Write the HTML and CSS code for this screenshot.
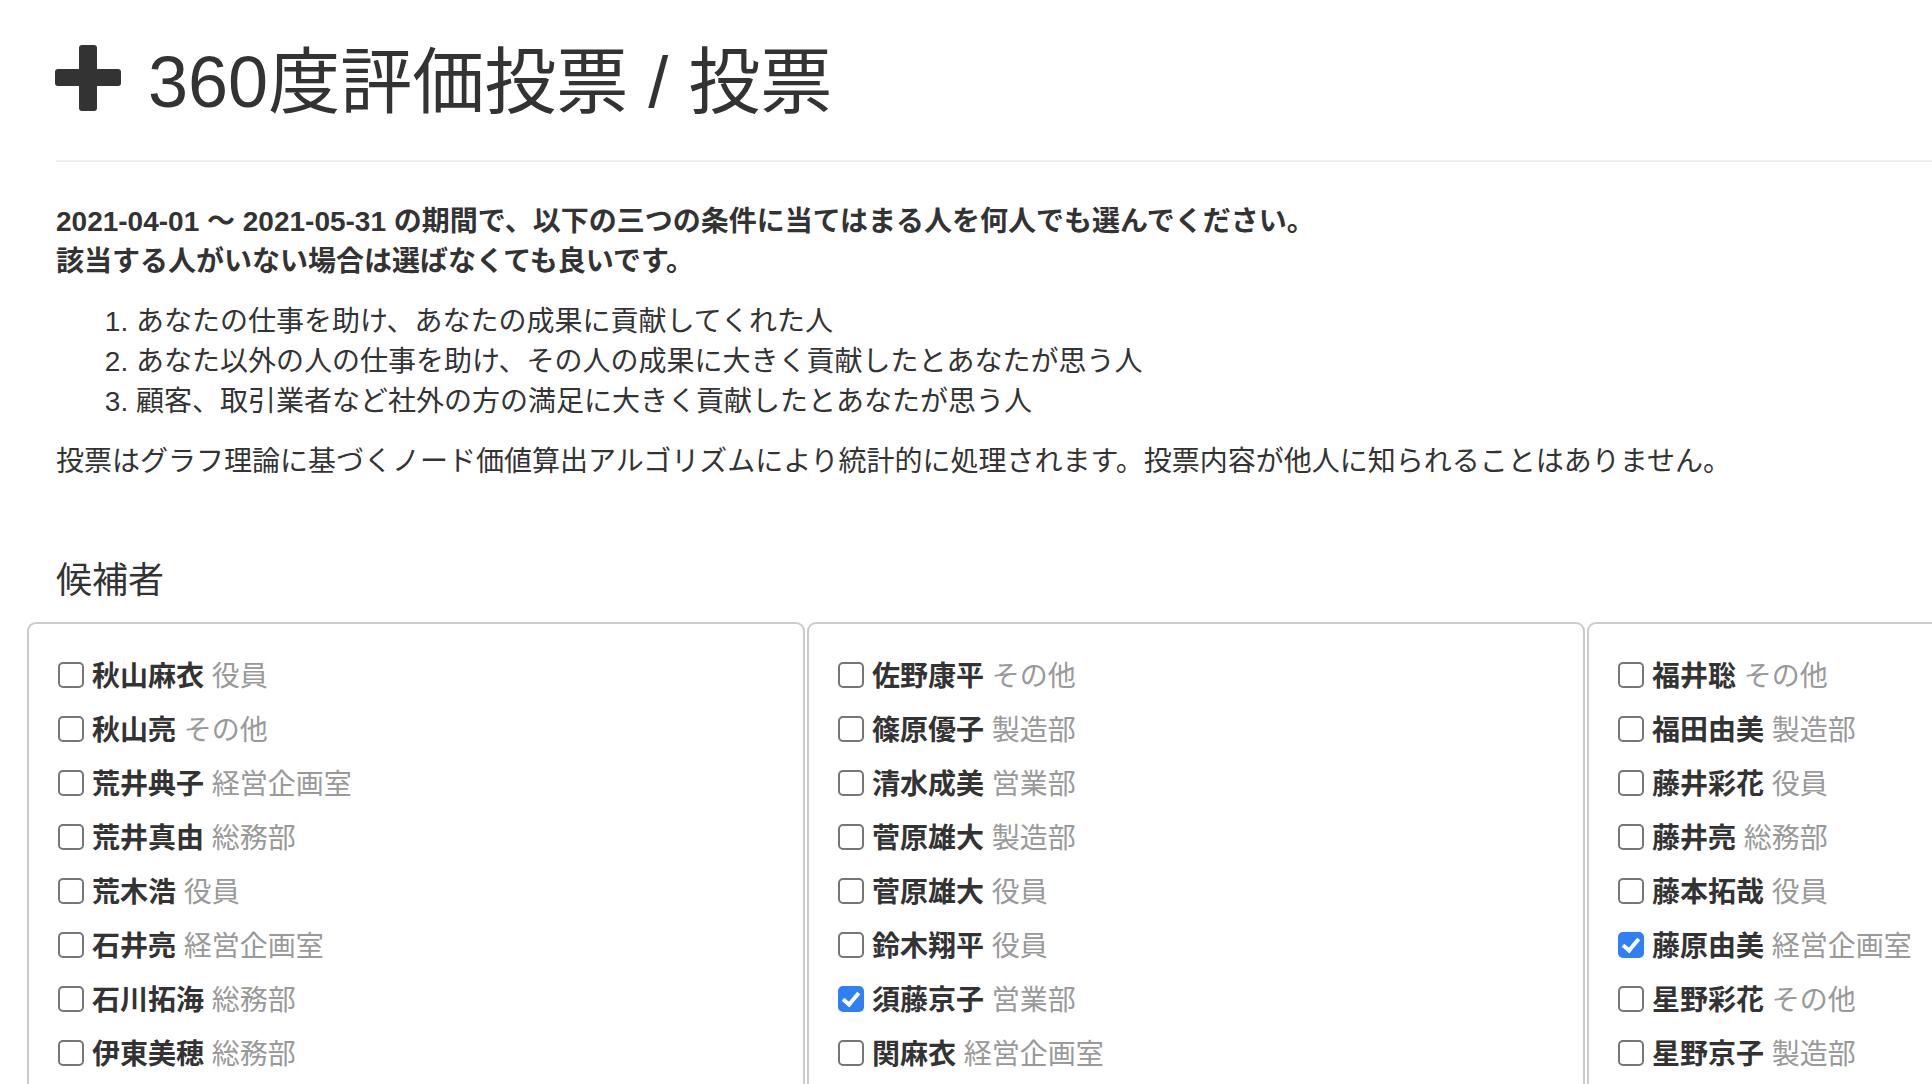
FILE: index.html
```html
<!DOCTYPE html>
<html lang="ja">
<head>
<meta charset="utf-8">
<title>360度評価投票 / 投票</title>
<link rel="stylesheet" href="styles.css">
</head>
<body>
<div class="page">
  <header class="page-header">
    <h1><svg class="plus" width="66" height="66" viewBox="0 0 66 66" aria-hidden="true"><rect x="24" y="0" width="18" height="66" rx="3"/><rect x="0" y="24" width="66" height="17" rx="3"/></svg><span class="title-text">360度評価投票 / 投票</span></h1>
  </header>

  <p class="intro">2021-04-01 ～ 2021-05-31 の期間で、以下の三つの条件に当てはまる人を何人でも選んでください。<br>該当する人がいない場合は選ばなくても良いです。</p>

  <ol class="conditions">
    <li>あなたの仕事を助け、あなたの成果に貢献してくれた人</li>
    <li>あなた以外の人の仕事を助け、その人の成果に大きく貢献したとあなたが思う人</li>
    <li>顧客、取引業者など社外の方の満足に大きく貢献したとあなたが思う人</li>
  </ol>

  <p class="note">投票はグラフ理論に基づくノード価値算出アルゴリズムにより統計的に処理されます。投票内容が他人に知られることはありません。</p>

  <h4 class="section-title">候補者</h4>

  <div class="columns">
    <div class="box">
      <label class="row"><input type="checkbox"><span class="text"><span class="name">秋山麻衣</span> <span class="dept">役員</span></span></label>
      <label class="row"><input type="checkbox"><span class="text"><span class="name">秋山亮</span> <span class="dept">その他</span></span></label>
      <label class="row"><input type="checkbox"><span class="text"><span class="name">荒井典子</span> <span class="dept">経営企画室</span></span></label>
      <label class="row"><input type="checkbox"><span class="text"><span class="name">荒井真由</span> <span class="dept">総務部</span></span></label>
      <label class="row"><input type="checkbox"><span class="text"><span class="name">荒木浩</span> <span class="dept">役員</span></span></label>
      <label class="row"><input type="checkbox"><span class="text"><span class="name">石井亮</span> <span class="dept">経営企画室</span></span></label>
      <label class="row"><input type="checkbox"><span class="text"><span class="name">石川拓海</span> <span class="dept">総務部</span></span></label>
      <label class="row"><input type="checkbox"><span class="text"><span class="name">伊東美穂</span> <span class="dept">総務部</span></span></label>
    </div>
    <div class="box">
      <label class="row"><input type="checkbox"><span class="text"><span class="name">佐野康平</span> <span class="dept">その他</span></span></label>
      <label class="row"><input type="checkbox"><span class="text"><span class="name">篠原優子</span> <span class="dept">製造部</span></span></label>
      <label class="row"><input type="checkbox"><span class="text"><span class="name">清水成美</span> <span class="dept">営業部</span></span></label>
      <label class="row"><input type="checkbox"><span class="text"><span class="name">菅原雄大</span> <span class="dept">製造部</span></span></label>
      <label class="row"><input type="checkbox"><span class="text"><span class="name">菅原雄大</span> <span class="dept">役員</span></span></label>
      <label class="row"><input type="checkbox"><span class="text"><span class="name">鈴木翔平</span> <span class="dept">役員</span></span></label>
      <label class="row"><input type="checkbox" checked><span class="text"><span class="name">須藤京子</span> <span class="dept">営業部</span></span></label>
      <label class="row"><input type="checkbox"><span class="text"><span class="name">関麻衣</span> <span class="dept">経営企画室</span></span></label>
    </div>
    <div class="box">
      <label class="row"><input type="checkbox"><span class="text"><span class="name">福井聡</span> <span class="dept">その他</span></span></label>
      <label class="row"><input type="checkbox"><span class="text"><span class="name">福田由美</span> <span class="dept">製造部</span></span></label>
      <label class="row"><input type="checkbox"><span class="text"><span class="name">藤井彩花</span> <span class="dept">役員</span></span></label>
      <label class="row"><input type="checkbox"><span class="text"><span class="name">藤井亮</span> <span class="dept">総務部</span></span></label>
      <label class="row"><input type="checkbox"><span class="text"><span class="name">藤本拓哉</span> <span class="dept">役員</span></span></label>
      <label class="row"><input type="checkbox" checked><span class="text"><span class="name">藤原由美</span> <span class="dept">経営企画室</span></span></label>
      <label class="row"><input type="checkbox"><span class="text"><span class="name">星野彩花</span> <span class="dept">その他</span></span></label>
      <label class="row"><input type="checkbox"><span class="text"><span class="name">星野京子</span> <span class="dept">製造部</span></span></label>
    </div>
  </div>
</div>
</body>
</html>
```

FILE: styles.css
```css
html {
  overflow: hidden;
}

body {
  margin: 0;
  background: #fff;
  color: #333;
  font-family: "Liberation Sans", "Noto Sans CJK JP", sans-serif;
  font-size: 28px;
  line-height: 40px;
}

.page {
  width: 2360px;
  padding-left: 56px;
}

.page-header {
  padding: 43px 0 18px;
  border-bottom: 2px solid #eee;
  margin-bottom: 40px;
}

.page-header h1 {
  margin: 0 0 20px -1px;
  font-size: 72px;
  line-height: 79px;
  font-weight: 400;
  display: flex;
  align-items: center;
}

.plus {
  fill: #333;
  flex: none;
  margin: 0 27px 9px 0;
}

.intro {
  margin: 0 0 20px;
  font-weight: 700;
}

.conditions {
  margin: 0 0 20px;
  padding-left: 80px;
}

.note {
  margin: 0 0 20px;
}

.section-title {
  margin: 79px 0 21px;
  font-size: 36px;
  line-height: 40px;
  font-weight: 400;
}

.columns {
  display: flex;
  gap: 2px;
  margin-left: -29px;
}

.box {
  width: 778px;
  box-sizing: border-box;
  border: 2px solid #ccc;
  border-radius: 9px;
  padding: 26px 0 60px 29px;
  flex: none;
}

.row {
  display: flex;
  align-items: center;
  height: 54px;
}

.row input {
  -webkit-appearance: none;
  appearance: none;
  width: 26px;
  height: 26px;
  margin: -4px 8px 0 0;
  box-sizing: border-box;
  border: 2px solid #767676;
  border-radius: 5px;
  background: #fff;
  position: relative;
  flex: none;
}

.row input:checked {
  background: #2f7ff6;
  border-color: #2f7ff6;
}

.row input:checked::after {
  content: "";
  position: absolute;
  left: 6px;
  top: 1px;
  width: 6px;
  height: 13px;
  border: solid #fff;
  border-width: 0 4px 4px 0;
  transform: rotate(40deg);
}

.text {
  white-space: nowrap;
}

.name {
  font-weight: 700;
}

.dept {
  color: #999;
}
```
